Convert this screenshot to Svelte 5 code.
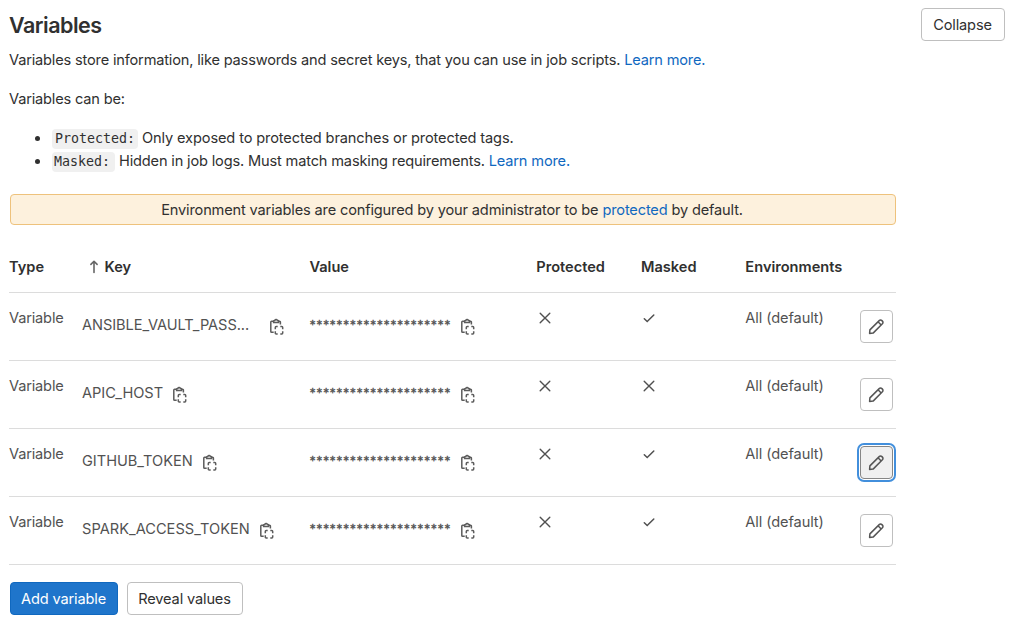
<script>
  const rows = [
    { key: 'ANSIBLE_VAULT_PASS...', width: 182.5, fit: -0.06, masked: true },
    { key: 'APIC_HOST', width: 86.4, fit: -0.03, masked: false },
    { key: 'GITHUB_TOKEN', width: 115.6, fit: -0.03, masked: true, focused: true },
    { key: 'SPARK_ACCESS_TOKEN', width: 173, fit: 0.02, masked: true },
  ];
  const stars = '*'.repeat(21);
</script>

{#snippet copyIcon()}
  <svg class="copy" width="16" height="18" viewBox="0 0 16 18" fill="none" stroke="#5c5c5c" stroke-width="1.5">
    <path d="M5 3.2H2.6a.8.8 0 0 0-.8.8v9.4a.8.8 0 0 0 .8.8h2.1M9.4 3.2h1.2a.8.8 0 0 1 .8.8v2.6" />
    <path d="M4.6 4.4V3.2a.7.7 0 0 1 .7-.7h.5a1.4 1.4 0 0 1 2.6 0h.5a.7.7 0 0 1 .7.7v1.2z" />
    <path d="M6.3 11.2V9.5a.9.9 0 0 1 .9-.9h1.5M11.3 8.6h1.5a.9.9 0 0 1 .9.9v1.7M13.7 13.3V15a.9.9 0 0 1-.9.9h-1.5M8.7 15.9H7.2a.9.9 0 0 1-.9-.9v-1.7" />
  </svg>
{/snippet}

{#snippet cross()}
  <svg class="mark" width="16" height="16" viewBox="0 0 16 16" fill="none" stroke="#505050" stroke-width="1.4" stroke-linecap="round">
    <path d="M3.2 3.2l9.6 9.6M12.8 3.2l-9.6 9.6" />
  </svg>
{/snippet}

{#snippet tick()}
  <svg class="mark" width="16" height="16" viewBox="0 0 16 16" fill="none" stroke="#505050" stroke-width="1.5" stroke-linecap="round">
    <path d="M3.3 8.7l2.9 2.8 6.6-6.5" />
  </svg>
{/snippet}

<main>
  <header>
    <h1>Variables</h1>
    <button class="btn collapse">Collapse</button>
  </header>
  <p class="intro"><span>Variables store information, like passwords and secret keys, that you can use in job scripts.</span>{' '}<a href="#help">Learn more.</a></p>
  <p class="can">Variables can be:</p>
  <ul>
    <li><code>Protected:</code> <span>Only exposed to protected branches or protected tags.</span></li>
    <li class="masked"><code>Masked:</code> <span>Hidden in job logs. Must match masking requirements.</span>{' '}<a href="#mask">Learn more.</a></li>
  </ul>
  <div class="notice"><span>Environment variables are configured by your administrator to be <a href="#protected">protected</a> by default.</span></div>

  <div class="table">
    <div class="row head">
      <div>Type</div>
      <div class="sort">
        <svg width="10" height="14" viewBox="0 0 10 14" fill="none" stroke="#666" stroke-width="1.6" stroke-linecap="round" stroke-linejoin="round"><path d="M5 12.4V1.5M1.9 4.4L5 1.3l3.1 3.1" /></svg>
        <span>Key</span>
      </div>
      <div>Value</div>
      <div>Protected</div>
      <div>Masked</div>
      <div>Environments</div>
    </div>
    {#each rows as row}
      <div class="row">
        <div class="text">Variable</div>
        <div class="key">
          <span style="width: {row.width}px; letter-spacing: {row.fit}px">{row.key}</span>
          {@render copyIcon()}
        </div>
        <div class="key">
          <span class="stars">{stars}</span>
          {@render copyIcon()}
        </div>
        <div class="flag">{@render cross()}</div>
        <div class="flag">
          {#if row.masked}{@render tick()}{:else}{@render cross()}{/if}
        </div>
        <div class="text env">All (default)</div>
        <button class="edit" class:focused={row.focused} aria-label="Edit">
          <svg width="17" height="17" viewBox="0 0 17 17" fill="none" stroke="#555" stroke-width="1.5" stroke-linejoin="round">
            <path d="M1.6 15.4l.3-3.5 9.3-9.3a1.9 1.9 0 0 1 2.7 0l.5.5a1.9 1.9 0 0 1 0 2.7l-9.3 9.3zM10 3.8l3.2 3.2" />
          </svg>
        </button>
      </div>
    {/each}
  </div>
  <footer>
    <button class="btn primary">Add variable</button>
    <button class="btn reveal">Reveal values</button>
  </footer>
</main>

<style>
  :global(body) { margin: 0; background: #fff; }
  main {
    box-sizing: border-box;
    height: 632px;
    padding: 8px 19px 0 9px;
    overflow: hidden;
    font: 14.6px/23px Inter, sans-serif;
    color: #303030;
    white-space: nowrap;
  }
  header { display: flex; justify-content: space-between; height: 33px; }
  h1 { margin: 0; font-size: 21.5px; line-height: 35px; font-weight: 600; letter-spacing: -0.5px; }
  p { margin: 0; }
  a { color: #1068bf; text-decoration: none; }
  .intro { margin-top: 8px; letter-spacing: -0.175px; }
  .can { margin-top: 16px; letter-spacing: -0.18px; }
  ul { margin: 15px 0 0; padding: 0 0 0 43px; }
  li { height: 23px; letter-spacing: -0.125px; }
  li::marker { font-size: 16px; }
  code {
    display: inline-block;
    box-sizing: border-box;
    height: 20px;
    width: 86px;
    padding: 0 3px;
    border-radius: 4px;
    background: #f0f0f0;
    font: 13.3px/20px "DejaVu Sans Mono", monospace;
    letter-spacing: 0;
  }
  .masked { letter-spacing: -0.165px; }
  .masked code { width: 63px; padding-left: 2px; letter-spacing: 0; }
  .notice {
    box-sizing: border-box;
    display: flex;
    justify-content: center;
    width: 886px;
    height: 31px;
    margin: 22px 0 0 1px;
    padding-right: 2px;
    border: 1px solid #eec27c;
    border-radius: 4px;
    background: #fdf1dd;
    line-height: 30px;
    letter-spacing: -0.16px;
  }
  .table { width: 887px; margin-top: 17px; }
  .row {
    box-sizing: border-box;
    display: grid;
    grid-template-columns: 73px 227.4px 226.9px 104.7px 104.4px 115px 33px;
    height: 68px;
    border-bottom: 1px solid #dcdcdc;
    color: #525252;
  }
  .head { height: 51px; padding-top: 14px; font-weight: 600; color: #303030; }
  .sort { display: flex; gap: 5.5px; padding-left: 7px; }
  .sort svg { margin-top: 4px; }
  .text { padding-top: 14px; letter-spacing: -0.17px; }
  .env { letter-spacing: -0.1px; }
  .key { display: flex; padding-top: 21px; }
  .copy { flex: none; margin: 3.5px 0 0 4px; }
  .stars { width: 146.6px; font-size: 12.5px; letter-spacing: 0.48px; -webkit-text-stroke: 0.3px #525252; }
  .flag { padding: 17px 0 0 0.5px; }
  .mark { display: block; }
  .edit {
    box-sizing: border-box;
    display: grid;
    place-items: center;
    width: 33px;
    height: 33px;
    margin: 17px 0 0 -0.4px;
    padding: 0;
    border: 1px solid #bfbfbf;
    border-radius: 4px;
    background: #fff;
  }
  .focused { border-color: #868686; background: #f0f0f0; box-shadow: 0 0 0 1px #fff, 0 0 0 3px #428fdc; }
  .btn {
    box-sizing: border-box;
    height: 33px;
    padding: 1px 1px 0 0;
    border: 1px solid #bfbfbf;
    border-radius: 4px;
    background: #fff;
    color: #303030;
    font: 14.6px/30px Inter, sans-serif;
    letter-spacing: -0.15px;
  }
  .collapse { width: 84px; }
  footer { display: flex; gap: 9px; margin: 17px 0 0 1px; }
  .primary { width: 108px; border-color: #1068bf; background: #1f75cb; color: #fff; }
  .reveal { width: 116px; }
</style>
